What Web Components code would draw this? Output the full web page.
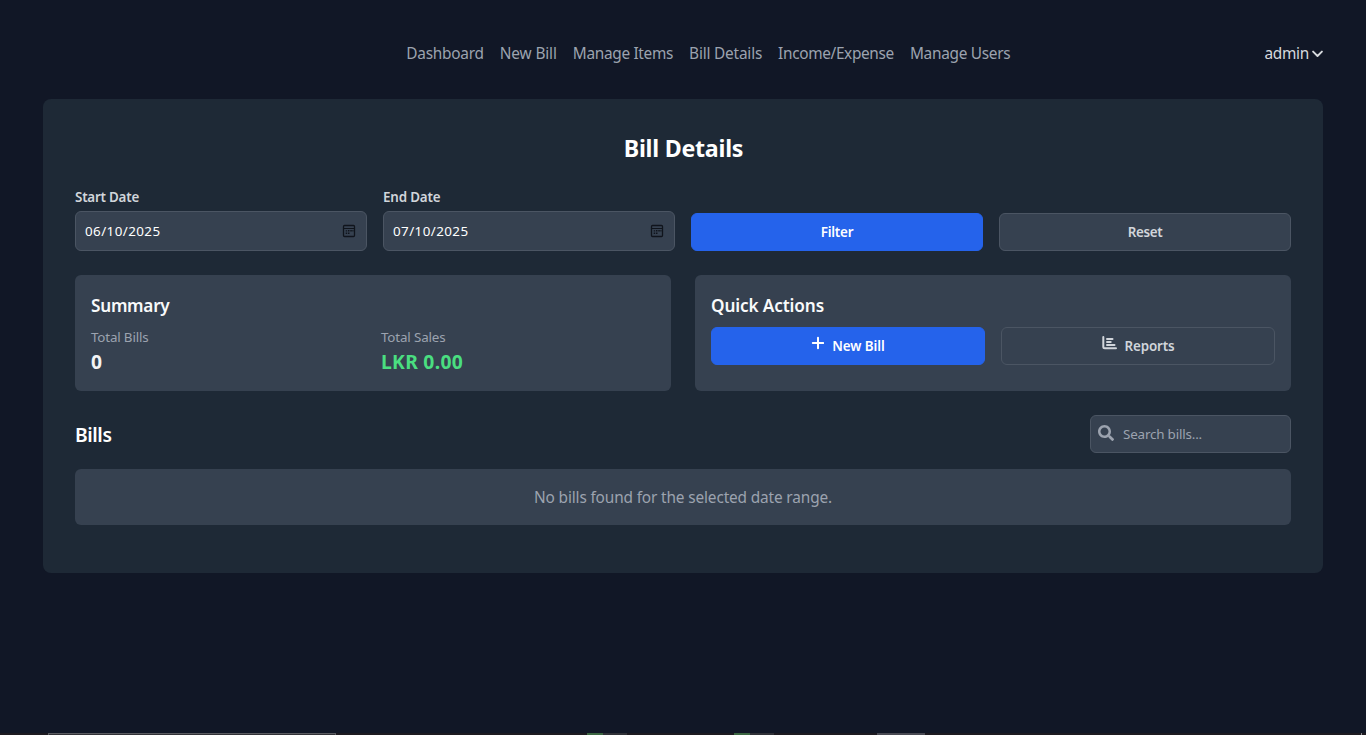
<!DOCTYPE html>
<html lang="en">
<head>
<meta charset="utf-8">
<title>Bill Details</title>
<style>
html,body{margin:0;height:100%;overflow:hidden}
body{background:#111726;color:#fff;font-family:"Noto Sans","Open Sans",sans-serif;--card:#1e2936;--panel:#364150}
</style>
</head>
<body>
<bill-app></bill-app>
<script>
const define = (name, html, setup) => {
  const t = document.createElement('template');
  t.innerHTML = html;
  customElements.define(name, class extends HTMLElement {
    constructor() {
      super();
      this.attachShadow({mode: 'open'}).appendChild(t.content.cloneNode(true));
    }
    connectedCallback() { if (setup) setup(this, this.shadowRoot); }
  });
};

/* One line of text, tracked so that it fills the given width. */
define('fit-text', `<style>
:host{display:inline-block;white-space:nowrap;flex:none}
span{display:inline-block;white-space:pre}
</style><span><slot></slot></span>`, (el, root) => {
  const target = parseFloat(el.getAttribute('w'));
  const s = root.querySelector('span');
  const natural = s.getBoundingClientRect().width;
  const n = el.textContent.length;
  s.style.letterSpacing = ((target - natural) / n).toFixed(3) + 'px';
  el.style.width = target + 'px';
});

define('calendar-icon', `<style>:host{display:block;width:14px;height:14px}svg{display:block}</style>
<svg width="14" height="14" viewBox="0 0 14 14"><rect x="1.5" y="1.5" width="11" height="11" rx="1" fill="none" stroke="#10141c" stroke-width="1.3"/><path d="M2 4.500h10" stroke="#10141c"/><path fill="#10141c" d="M6 6h1.500v1.500H6zM8.300 6h1.500v1.500H8.300zM10.400 6h1.100v1.500h-1.100zM3.700 8.500h1.500V10H3.700zM6 8.500h1.500V10H6zM3.700 6.300h1.500v1.200H3.700z"/></svg>`);

define('nav-bar', `<style>
:host{display:flex;align-items:center;height:24px;font-size:15.4px;line-height:24px;color:#9ca3af}
nav{display:flex;gap:16px;margin-left:363.3px}
.user{margin-left:auto;display:flex;align-items:center;gap:3px;color:#d7dade}
svg{display:block}
</style>
<nav>
<fit-text w="77.5">Dashboard</fit-text><fit-text w="57">New Bill</fit-text><fit-text w="100.3">Manage Items</fit-text><fit-text w="73">Bill Details</fit-text><fit-text w="115.8">Income/Expense</fit-text><fit-text w="100.5">Manage Users</fit-text>
</nav>
<div class="user"><fit-text w="44.500">admin</fit-text><svg width="11" height="12" viewBox="0 0 11 12"><path d="M1.100 3.600 5.500 8l4.400-4.400" fill="none" stroke="currentColor" stroke-width="1.900" stroke-linecap="round" stroke-linejoin="round"/></svg></div>`);

define('date-field', `<style>
:host{display:block;font-size:13.4px}
label{display:block;height:20px;line-height:20px;font-weight:600;color:#d1d5db;margin-bottom:4px}
.box{box-sizing:border-box;height:40px;border:1px solid #4b5563;border-radius:6px;background:var(--panel);display:flex;align-items:center;justify-content:space-between;padding:0 10px 0 9px;color:#fff}
</style><label><slot name="label"></slot></label><div class="box"><slot></slot><calendar-icon></calendar-icon></div>`);

define('ui-button', `<style>
:host{box-sizing:border-box;display:flex;align-items:center;justify-content:center;gap:8px;height:38px;border-radius:6px;border:1px solid #4b5563;background:var(--panel);color:#d1d5db;font-size:13.4px;line-height:20px;font-weight:600;align-self:end}
:host([primary]){background:#2563eb;border-color:#2563eb;color:#fff}
::slotted(svg){display:block;position:relative;top:-3px}
</style><slot></slot>`);

define('ui-panel', `<style>
:host{display:block;box-sizing:border-box;height:116px;padding:16px;border-radius:6px;background:var(--panel)}
h3{box-sizing:border-box;margin:0 0 8px;padding-top:1px;font-size:17.2px;line-height:28px;height:28px;font-weight:600;color:#f9fafb}
.cols{display:grid;grid-template-columns:1fr 1fr;gap:16px}
</style><h3><slot name="title"></slot></h3><div class="cols"><slot></slot></div>`);

define('ui-stat', `<style>
:host{display:block}
.k{font-size:13.4px;line-height:20px;height:20px;color:#9ca3af}
.v{box-sizing:border-box;padding-top:1px;font-size:19.3px;line-height:28px;height:28px;font-weight:700;color:var(--value,#f3f4f6)}
</style><div class="k"><slot name="label"></slot></div><div class="v"><slot></slot></div>`);

define('search-box', `<style>
:host{box-sizing:border-box;display:flex;align-items:center;width:201px;height:38px;border:1px solid #4b5563;border-radius:6px;background:var(--panel);color:#9ca3af;font-size:13.4px;line-height:20px;padding-left:7px;gap:9px}
svg{display:block;margin-top:-2px}
</style><svg width="16" height="16" viewBox="0 0 512 512"><path fill="currentColor" d="M505 442.700 405.300 343c-4.500-4.500-10.600-7-17-7H372c27.600-35.300 44-79.700 44-128C416 93.100 322.900 0 208 0S0 93.100 0 208s93.100 208 208 208c48.300 0 92.700-16.400 128-44v16.300c0 6.400 2.500 12.500 7 17l99.700 99.700c9.400 9.400 24.600 9.400 33.900 0l28.300-28.300c9.400-9.400 9.400-24.600.1-34zM208 336c-70.700 0-128-57.200-128-128 0-70.700 57.200-128 128-128 70.700 0 128 57.200 128 128 0 70.700-57.200 128-128 128z"/></svg><fit-text w="79">Search bills...</fit-text>`);

/* Sliver of the desktop taskbar along the lower edge. */
define('bottom-strip', `<style>
:host{display:grid;height:2px;background:#1d1a20;grid-template-columns:48px 288px 251px 16px 24px 107px 16px 24px 103px 48px 436px 1px 1fr}
.w{background:#323237;border-top:1px solid #5b5c61;border-left:1px solid #5b5c61;border-right:1px solid #5b5c61}
.g{background:#3b6641}.d{background:#303137}.l{background:#494a53}.p{background:#85868b}
</style><i></i><i class="w"></i><i></i><i class="g"></i><i class="d"></i><i></i><i class="g"></i><i class="d"></i><i></i><i class="l"></i><i></i><i class="p"></i>`);

define('bill-app', `<style>
:host{display:flex;flex-direction:column;height:735px;width:1366px;box-sizing:border-box;padding-top:42px}
nav-bar,main{margin:0 43px}
main{box-sizing:border-box;margin-top:33px;height:474px;border-radius:8px;background:var(--card);padding:32px}
h2{box-sizing:border-box;margin:0 0 24px;padding:1px 0 0 1px;font-size:23.2px;line-height:32px;height:32px;text-align:center;font-weight:700;color:#fff}
.filters{display:grid;grid-template-columns:repeat(4,1fr);gap:16px;margin-bottom:24px}
.panels{display:grid;grid-template-columns:1fr 1fr;gap:24px;margin-bottom:24px}
.head{display:flex;align-items:center;justify-content:space-between;height:38px;margin-bottom:16px}
.head h3{margin:0;padding-top:2px;font-size:19.3px;line-height:28px;font-weight:600;color:#fff}
.empty{box-sizing:border-box;padding-top:2px;height:56px;border-radius:6px;background:var(--panel);display:flex;align-items:center;justify-content:center;font-size:15.4px;line-height:24px;color:#9ca3af}
bottom-strip{margin-top:auto}
.green{--value:#4ade80}
</style>
<nav-bar></nav-bar>
<main>
<h2><fit-text w="119.500">Bill Details</fit-text></h2>
<div class="filters">
<date-field><fit-text slot="label" w="64">Start Date</fit-text><fit-text w="75.500">06/10/2025</fit-text></date-field>
<date-field><fit-text slot="label" w="57.500">End Date</fit-text><fit-text w="75.500">07/10/2025</fit-text></date-field>
<ui-button primary><fit-text w="32.500">Filter</fit-text></ui-button>
<ui-button><fit-text w="34.500">Reset</fit-text></ui-button>
</div>
<div class="panels">
<ui-panel><fit-text slot="title" w="78.500">Summary</fit-text>
<ui-stat><fit-text slot="label" w="57.500">Total Bills</fit-text><fit-text w="11.500">0</fit-text></ui-stat>
<ui-stat class="green"><fit-text slot="label" w="64.500">Total Sales</fit-text><fit-text w="82">LKR 0.00</fit-text></ui-stat>
</ui-panel>
<ui-panel><fit-text slot="title" w="113">Quick Actions</fit-text>
<ui-button primary><svg width="13" height="14" viewBox="0 0 13 14"><path d="M7 1.800v10.400M1.800 7h10.400" fill="none" stroke="currentColor" stroke-width="2" stroke-linecap="round"/></svg><fit-text w="52.500">New Bill</fit-text></ui-button>
<ui-button><svg width="15" height="14" viewBox="0 0 15 14"><path d="M1.300 1v9.700q0 1.500 1.500 1.500H14" fill="none" stroke="currentColor" stroke-width="2" stroke-linecap="round"/><path d="M5 3h5.500M5 6h3.700M5 9h7.500" fill="none" stroke="currentColor" stroke-width="2" stroke-linecap="round"/></svg><fit-text w="50">Reports</fit-text></ui-button>
</ui-panel>
</div>
<div class="head"><h3><fit-text w="36.500">Bills</fit-text></h3><search-box></search-box></div>
<div class="empty"><fit-text w="298">No bills found for the selected date range.</fit-text></div>
</main>
<bottom-strip></bottom-strip>`);
</script>
</body>
</html>
